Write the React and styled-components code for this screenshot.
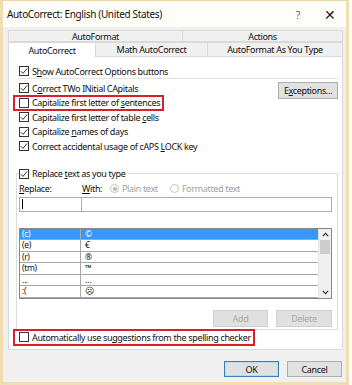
import React from "react";
import styled, { createGlobalStyle } from "styled-components";

const GlobalStyle = createGlobalStyle`
  html, body {
    margin: 0;
    padding: 0;
    background: #ffffff;
  }
  body {
    font-family: "Noto Sans", "Open Sans", sans-serif;
    font-size: 9px;
    letter-spacing: -0.35px;
    color: #000;
  }
  * {
    box-sizing: border-box;
  }
`;

const Window = styled.div`
  width: 349px;
  height: 385px;
  display: flex;
  flex-direction: column;
  background: #f0f0f0;
  border: 3px solid #f2ddb0;
  border-top: 1px solid #eed7a6;
`;

const TitleBar = styled.div`
  height: 26px;
  display: flex;
  align-items: center;
  padding-left: 4px;
  background: #fffdf8;
  font-size: 10px;
  color: #111;
`;

const Title = styled.span`
  flex: 1;
`;

const TitleButton = styled.span`
  width: 32px;
  text-align: center;
  font-size: ${(p) => (p.$big ? "14px" : "11px")};
  font-weight: 300;
  color: #222;
`;

const Body = styled.div`
  flex: 1;
  display: flex;
  flex-direction: column;
  padding: 3px 3px 0 5px;
`;

const TabRow = styled.div`
  display: flex;
  height: ${(p) => p.$h}px;
`;

const Tab = styled.div`
  width: ${(p) => p.$w}px;
  display: flex;
  align-items: center;
  justify-content: center;
  font-size: 9px;
  color: #111;
  background: ${(p) => (p.$active ? "#ffffff" : "#f0f0f0")};
  border: 1px solid #d9d9d9;
  border-bottom: ${(p) => (p.$active ? "none" : "1px solid #d9d9d9")};
  margin-left: -1px;
  &:first-child {
    margin-left: 0;
  }
`;

const Panel = styled.div`
  height: 293px;
  background: #ffffff;
  border: 1px solid #d9d9d9;
  border-top: none;
  padding: 7px 4px 0 10px;
  display: flex;
  flex-direction: column;
`;

const Row = styled.div`
  display: ${(p) => (p.$marked ? "inline-flex" : "flex")};
  align-self: flex-start;
  align-items: center;
  gap: 3px;
  height: ${(p) => p.$h || 14.5}px;
  white-space: nowrap;
  color: #111;
  ${(p) =>
    p.$marked &&
    `
    outline: 2px solid #d7202c;
    outline-offset: -1px;
    margin-left: -5px;
    padding: 0 3px 0 5px;
  `}
`;

const Box = styled.span`
  width: 10px;
  height: 10px;
  flex: none;
  border: 1px solid #333;
  background: #fff;
  display: flex;
  align-items: center;
  justify-content: center;
`;

const Divider = styled.div`
  height: 1px;
  background: #e3e3e3;
  margin: 0 -1px 2px 0;
`;

const Checks = styled.div`
  display: flex;
  align-items: flex-start;
`;

const CheckList = styled.div`
  flex: 1;
  display: flex;
  flex-direction: column;
`;

const Button = styled.div`
  width: ${(p) => p.$w}px;
  height: ${(p) => p.$h || 17}px;
  display: flex;
  align-items: center;
  justify-content: center;
  font-size: 9px;
  color: ${(p) => (p.$disabled ? "#a8a8a8" : "#111")};
  background: ${(p) => (p.$disabled ? "#e0e0e0" : "#e1e1e1")};
  border: ${(p) =>
    p.$default ? "1px solid #3c7fb1" : p.$disabled ? "1px solid #cfcfcf" : "1px solid #adadad"};
  box-shadow: ${(p) => (p.$default ? "inset 0 0 0 1px #bcd8ee" : "none")};
  margin-top: ${(p) => p.$mt || 0}px;
`;

const Group = styled.fieldset`
  margin: 14px 0 0 -3px;
  padding: 0 5px 2px 2px;
  border: 1px solid #dcdcdc;
  min-width: 0;
`;

const Legend = styled.legend`
  padding: 0 2px 0 0;
  margin: 0;
`;

const LabelRow = styled.div`
  display: flex;
  align-items: center;
  height: 12px;
  margin-top: 3px;
  color: #111;
`;

const Label = styled.span`
  width: ${(p) => p.$w}px;
  flex: none;
`;

const Radio = styled.span`
  display: flex;
  align-items: center;
  gap: 3px;
  flex: none;
  width: ${(p) => (p.$w ? `${p.$w}px` : "auto")};
  color: #a0a0a0;
`;

const RadioDot = styled.span`
  width: 9px;
  height: 9px;
  flex: none;
  border-radius: 50%;
  border: 1px solid #c4c4c4;
  background: #fff;
  display: flex;
  align-items: center;
  justify-content: center;
  &::after {
    content: "";
    width: 4px;
    height: 4px;
    border-radius: 50%;
    background: ${(p) => (p.$on ? "#b8b8b8" : "transparent")};
  }
`;

const Inputs = styled.div`
  display: flex;
  height: 15px;
  margin-top: 2px;
`;

const Input = styled.div`
  height: 15px;
  border: 1px solid #abadb3;
  background: #fff;
  display: flex;
  align-items: center;
  padding-left: 2px;
  ${(p) => (p.$w ? `width: ${p.$w}px;` : "flex: 1; margin-left: -1px;")}
`;

const Caret = styled.span`
  width: 1px;
  height: 10px;
  background: #000;
`;

const List = styled.div`
  display: flex;
  height: 71px;
  margin-top: 16px;
  border: 1px solid #828790;
  background: #fff;
`;

const Rows = styled.div`
  flex: 1;
  display: flex;
  flex-direction: column;
`;

const ListRow = styled.div`
  display: flex;
  height: 11.6px;
  font-size: 8.5px;
  line-height: 10px;
  color: ${(p) => (p.$sel ? "#fff" : "#111")};
  background: ${(p) => (p.$sel ? "#3399ff" : "#fff")};
  border-bottom: 1px solid #a8a8a8;
`;

const Cell = styled.span`
  display: flex;
  align-items: center;
  padding-left: 2px;
  ${(p) => (p.$first ? "width: 61px; border-right: 1px solid #a8a8a8;" : "flex: 1; padding-left: 4px;")}
`;

const Scroll = styled.div`
  width: 13px;
  display: flex;
  flex-direction: column;
  background: #f0f0f0;
  border-left: 1px solid #e6e6e6;
`;

const ScrollArrow = styled.div`
  height: 11px;
  display: flex;
  align-items: center;
  justify-content: center;
`;

const Thumb = styled.div`
  height: 14px;
  margin: 0 1px;
  background: #cdcdcd;
`;

const Track = styled.div`
  flex: 1;
`;

const ButtonRow = styled.div`
  display: flex;
  justify-content: flex-end;
  gap: 8px;
  margin-top: 11px;
`;

const Footer = styled.div`
  display: flex;
  justify-content: flex-end;
  gap: 8px;
  padding-right: 1px;
  margin-top: 11px;
`;

const Check = ({ on }) => (
  <Box>
    {on && (
      <svg width="8" height="8" viewBox="0 0 8 8">
        <path d="M0.8 4.2 L3 6.4 L7.2 1.4" fill="none" stroke="#333" strokeWidth="1" />
      </svg>
    )}
  </Box>
);

const Chevron = ({ up }) => (
  <svg width="7" height="5" viewBox="0 0 7 5">
    <path
      d={up ? "M0.8 4.2 L3.5 1.3 L6.2 4.2" : "M0.8 0.8 L3.5 3.7 L6.2 0.8"}
      fill="none"
      stroke="#333"
      strokeWidth="1.2"
    />
  </svg>
);

const entries = [
  ["(c)", "©"],
  ["(e)", "€"],
  ["(r)", "®"],
  ["(tm)", "™"],
  ["...", "…"],
  [":(", "☹"],
];

export default function App() {
  return (
    <>
      <GlobalStyle />
      <Window>
        <TitleBar>
          <Title>AutoCorrect: English (United States)</Title>
          <TitleButton>?</TitleButton>
          <TitleButton $big>✕</TitleButton>
        </TitleBar>
        <Body>
          <TabRow $h={12}>
            <Tab $w={175}>AutoFormat</Tab>
            <Tab $w={161}>Actions</Tab>
          </TabRow>
          <TabRow $h={15}>
            <Tab $w={88} $active>
              AutoCorrect
            </Tab>
            <Tab $w={113}>Math AutoCorrect</Tab>
            <Tab $w={136}>AutoFormat As You Type</Tab>
          </TabRow>
          <Panel>
            <Row $h={14}>
              <Check on />
              <span>
                S<u>h</u>ow AutoCorrect Options buttons
              </span>
            </Row>
            <Divider />
            <Checks>
              <CheckList>
                <Row>
                  <Check on />
                  <span>
                    C<u>o</u>rrect TWo INitial CApitals
                  </span>
                </Row>
                <Row $marked>
                  <Check />
                  <span>
                    Capitalize first letter of <u>s</u>entences
                  </span>
                </Row>
                <Row>
                  <Check on />
                  <span>
                    Capitalize first letter of table <u>c</u>ells
                  </span>
                </Row>
                <Row>
                  <Check on />
                  <span>
                    Capitalize <u>n</u>ames of days
                  </span>
                </Row>
                <Row>
                  <Check on />
                  <span>
                    Correct accidental usage of cAPS <u>L</u>OCK key
                  </span>
                </Row>
              </CheckList>
              <Button $w={60} $mt={1}>
                <span>
                  E<u>x</u>ceptions...
                </span>
              </Button>
            </Checks>
            <Group>
              <Legend>
                <Row $h={12}>
                  <Check on />
                  <span>
                    Replace <u>t</u>ext as you type
                  </span>
                </Row>
              </Legend>
              <LabelRow>
                <Label $w={63}>
                  <u>R</u>eplace:
                </Label>
                <Label $w={28}>
                  <u>W</u>ith:
                </Label>
                <Radio $w={60}>
                  <RadioDot $on />
                  Plain text
                </Radio>
                <Radio>
                  <RadioDot />
                  Formatted text
                </Radio>
              </LabelRow>
              <Inputs>
                <Input $w={63}>
                  <Caret />
                </Input>
                <Input />
              </Inputs>
              <List>
                <Rows>
                  {entries.map(([from, to], i) => (
                    <ListRow key={from} $sel={i === 0}>
                      <Cell $first>{from}</Cell>
                      <Cell>{to}</Cell>
                    </ListRow>
                  ))}
                </Rows>
                <Scroll>
                  <ScrollArrow>
                    <Chevron up />
                  </ScrollArrow>
                  <Thumb />
                  <Track />
                  <ScrollArrow>
                    <Chevron />
                  </ScrollArrow>
                </Scroll>
              </List>
              <ButtonRow>
                <Button $w={55} $disabled>
                  Add
                </Button>
                <Button $w={56} $disabled>
                  Delete
                </Button>
              </ButtonRow>
            </Group>
            <Row $marked $h={15}>
              <Check />
              <span>
                Automatically use su<u>g</u>gestions from the spelling checker
              </span>
            </Row>
          </Panel>
          <Footer>
            <Button $w={55} $h={16} $default>
              OK
            </Button>
            <Button $w={55} $h={16}>
              Cancel
            </Button>
          </Footer>
        </Body>
      </Window>
    </>
  );
}
